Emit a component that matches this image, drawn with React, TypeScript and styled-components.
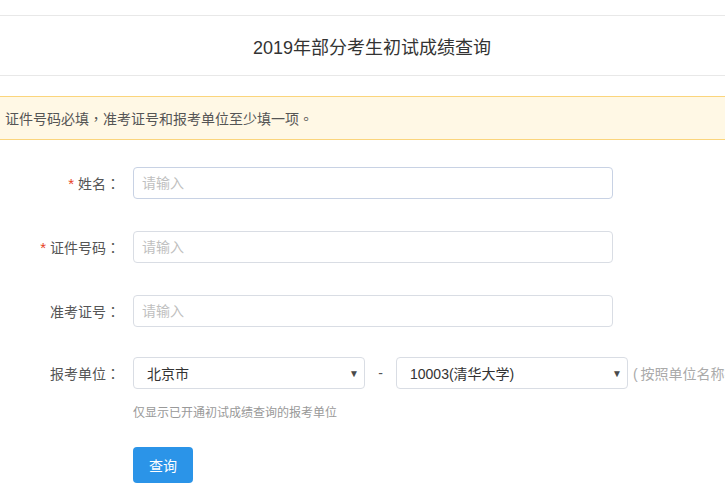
import React from "react";
import styled, { createGlobalStyle } from "styled-components";

const GlobalStyle = createGlobalStyle`
  body {
    margin: 0;
    background: #fff;
    font-family: "Liberation Sans", "Noto Sans CJK SC", sans-serif;
    color: #333;
  }
`;

type Field = { label: string; required?: boolean; hover?: boolean; gap: number };

const fields: Field[] = [
  { label: "姓名", required: true, hover: true, gap: 32 },
  { label: "证件号码", required: true, gap: 32 },
  { label: "准考证号", gap: 30 },
];

export default function App() {
  return (
    <Page>
      <GlobalStyle />
      <Header>
        <Title>2019年部分考生初试成绩查询</Title>
      </Header>
      <Alert>
        证件号码必填<Punct>，</Punct>准考证号和报考单位至少填一项<Punct>。</Punct>
      </Alert>
      <Form>
        {fields.map((f) => (
          <Row key={f.label} $gap={f.gap}>
            <Label>
              {f.required && <Star>*</Star>}
              {f.label}
              <Punct>：</Punct>
            </Label>
            <Input placeholder="请输入" $hover={f.hover} />
          </Row>
        ))}
        <Row $gap={0}>
          <Label>
            报考单位<Punct>：</Punct>
          </Label>
          <Selects>
            <Select>
              <span>北京市</span>
              <Arrow>▼</Arrow>
            </Select>
            <Dash>-</Dash>
            <Select>
              <span>10003(清华大学)</span>
              <Arrow>▼</Arrow>
            </Select>
            <SideNote>( 按照单位名称排序 )</SideNote>
          </Selects>
        </Row>
        <Hint>仅显示已开通初试成绩查询的报考单位</Hint>
        <Submit>查询</Submit>
      </Form>
    </Page>
  );
}

const Page = styled.div`
  width: 725px;
  height: 496px;
  overflow: hidden;
  padding-top: 15px;
  box-sizing: border-box;
`;

const Header = styled.header`
  height: 59px;
  padding-left: 19px;
  border-top: 1px solid #e8e8e8;
  border-bottom: 1px solid #e8e8e8;
  display: flex;
  align-items: center;
  justify-content: center;
`;

const Title = styled.h1`
  margin: 0;
  font-size: 18px;
  font-weight: normal;
  color: #333;
`;

const Punct = styled.span`
  font-family: "Noto Sans CJK TC", sans-serif;
`;

const Alert = styled.div`
  margin-top: 20px;
  height: 42px;
  display: flex;
  align-items: center;
  padding-left: 5px;
  background: #fff8e5;
  border-top: 1px solid #fbd57c;
  border-bottom: 1px solid #fbd57c;
  font-size: 14px;
  color: #555;
  white-space: nowrap;
`;

const Form = styled.div`
  padding-top: 27px;
  display: flex;
  flex-direction: column;
  align-items: flex-start;
`;

const Row = styled.div<{ $gap: number }>`
  display: flex;
  align-items: center;
  height: 32px;
  margin-bottom: ${(p) => p.$gap}px;
`;

const Label = styled.label`
  flex-shrink: 0;
  width: 120px;
  margin-right: 13px;
  text-align: right;
  font-size: 14px;
  color: #555;
  white-space: nowrap;
`;

const Star = styled.span`
  color: #e6401e;
  margin-right: 4px;
  font-size: 15px;
`;

const Input = styled.input<{ $hover?: boolean }>`
  width: 480px;
  height: 32px;
  box-sizing: border-box;
  border: 1px solid ${(p) => (p.$hover ? "#c8d2e4" : "#d9dde4")};
  border-radius: 4px;
  padding: 0 8px;
  font-size: 14px;
  font-family: "Liberation Sans", "Noto Sans CJK SC", sans-serif;
  outline: none;

  &::placeholder {
    color: #bfbfbf;
  }
`;

const Selects = styled.div`
  display: flex;
  align-items: center;
  white-space: nowrap;
`;

const Select = styled.div`
  flex-shrink: 0;
  width: 232px;
  height: 32px;
  box-sizing: border-box;
  border: 1px solid #d9dde4;
  border-radius: 4px;
  padding: 0 5px 0 13px;
  display: flex;
  align-items: center;
  justify-content: space-between;
  font-size: 14px;
  color: #333;
`;

const Arrow = styled.span`
  font-size: 10px;
  color: #4a4a4a;
`;

const Dash = styled.span`
  width: 31px;
  text-align: center;
  font-size: 14px;
  color: #555;
`;

const SideNote = styled.span`
  margin-left: 5px;
  font-size: 14px;
  color: #aaa;
  word-spacing: -1px;
`;

const Hint = styled.div`
  margin: 15px 0 0 133px;
  font-size: 12px;
  line-height: 18px;
  color: #999;
`;

const Submit = styled.button`
  margin: 25px 0 0 133px;
  width: 60px;
  height: 36px;
  border: none;
  border-radius: 4px;
  background: #2b94e8;
  color: #fff;
  font-size: 14px;
  font-family: "Liberation Sans", "Noto Sans CJK SC", sans-serif;
  cursor: pointer;
`;
